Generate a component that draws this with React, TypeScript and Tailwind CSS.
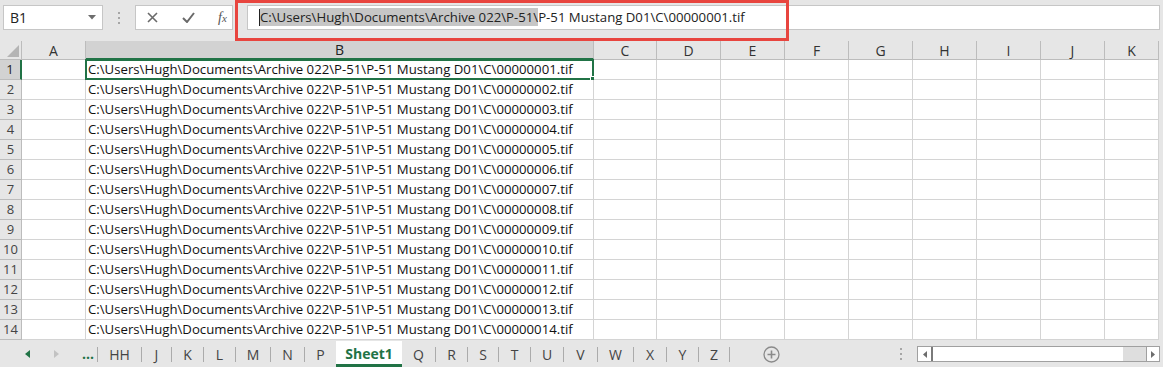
import { useState } from 'react'

const cellFont = { fontFamily: '"Open Sans", "Noto Sans", sans-serif' }

// column letters with widths (px, border included)
const COLUMNS = [
  { name: 'A', w: 'w-[64px]' },
  { name: 'B', w: 'w-[508px]' },
  { name: 'C', w: 'w-[63px]' },
  { name: 'D', w: 'w-[64px]' },
  { name: 'E', w: 'w-[64px]' },
  { name: 'F', w: 'w-[64px]' },
  { name: 'G', w: 'w-[64px]' },
  { name: 'H', w: 'w-[64px]' },
  { name: 'I', w: 'w-[64px]' },
  { name: 'J', w: 'w-[64px]' },
  { name: 'K', w: 'w-[54px]' },
]

const TABS_BEFORE = [
  { name: 'HH', w: 'w-[43px]' },
  { name: 'J', w: 'w-[29px]' },
  { name: 'K', w: 'w-[31px]' },
  { name: 'L', w: 'w-[31px]' },
  { name: 'M', w: 'w-[34px]' },
  { name: 'N', w: 'w-[33px]' },
  { name: 'P', w: 'w-[31px]' },
]

const TABS_AFTER = [
  { name: 'Q', w: 'w-[33px]' },
  { name: 'R', w: 'w-[31px]' },
  { name: 'S', w: 'w-[30px]' },
  { name: 'T', w: 'w-[31px]' },
  { name: 'U', w: 'w-[32px]' },
  { name: 'V', w: 'w-[33px]' },
  { name: 'W', w: 'w-[35px]' },
  { name: 'X', w: 'w-[32px]' },
  { name: 'Y', w: 'w-[31px]' },
  { name: 'Z', w: 'w-[30px]' },
]

const ROWS = Array.from({ length: 14 }, (_, i) => i + 1)

function pathFor(n: number) {
  return `C:\\Users\\Hugh\\Documents\\Archive 022\\P-51\\P-51 Mustang D01\\C\\${String(n).padStart(8, '0')}.tif`
}

function Grip() {
  return (
    <div className="flex flex-col gap-[3px]">
      <span className="h-[2px] w-[2px] bg-[#a6a6a6]" />
      <span className="h-[2px] w-[2px] bg-[#a6a6a6]" />
      <span className="h-[2px] w-[2px] bg-[#a6a6a6]" />
    </div>
  )
}

function FormulaBar() {
  return (
    <div className="relative flex h-[41px] shrink-0 items-start bg-[#e6e6e6] pt-[5px]">
      {/* name box */}
      <div className="ml-[3px] flex h-[25px] w-[100px] items-center justify-between border border-[#c6c6c6] bg-white pl-[6px] pr-[6px]">
        <span className="text-[14px] text-[#222]" style={cellFont}>
          B1
        </span>
        <svg width="8" height="5" viewBox="0 0 8 5">
          <path d="M0 0h8L4 4.5z" fill="#6d6d6d" />
        </svg>
      </div>
      <div className="flex h-[25px] w-[32px] items-center justify-center">
        <Grip />
      </div>
      {/* cancel / enter / fx */}
      <div className="flex h-[25px] w-[98px] items-center border border-[#c6c6c6] bg-white">
        <svg className="ml-[11px]" width="11" height="11" viewBox="0 0 11 11">
          <path d="M1 1l9 9M10 1l-9 9" stroke="#6a6a6a" strokeWidth="1.6" />
        </svg>
        <svg className="ml-[24px]" width="13" height="11" viewBox="0 0 13 11">
          <path d="M1 6l4 4 7-9" stroke="#6a6a6a" strokeWidth="2" fill="none" />
        </svg>
        <span className="ml-[23px] text-[14px] italic text-[#555]" style={{ fontFamily: '"Liberation Serif", serif' }}>
          f<span className="text-[11px]">x</span>
        </span>
      </div>
      {/* formula input */}
      <div className="ml-[14px] mr-[3px] flex h-[25px] flex-1 items-center border border-[#c6c6c6] bg-white pl-[11px]">
        <span className="h-[17px] w-px bg-[#222]" />
        <span className="whitespace-pre text-[13.2px] text-[#222]" style={cellFont}>
          <span className="bg-[#c6c6c6]">C:\Users\Hugh\Documents\Archive 022\P-51\</span>P-51 Mustang D01\C\00000001.tif
        </span>
      </div>
      {/* red highlight annotation */}
      <div className="pointer-events-none absolute left-[235px] top-0 h-[41px] w-[554px] border-[3px] border-[#e8453f]" />
    </div>
  )
}

function Sheet() {
  const [active] = useState({ row: 1, col: 'B' })
  return (
    <div className="flex-1 bg-[#e6e6e6]" style={cellFont}>
      {/* column headers */}
      <div className="flex h-[19px]">
        <div className="relative w-[22px] border-r border-b border-[#bcbcbc] bg-[#e6e6e6]">
          <svg className="absolute bottom-[2px] right-[2px]" width="12" height="12" viewBox="0 0 12 12">
            <path d="M12 0v12H0z" fill="#b4b4b4" />
          </svg>
        </div>
        {COLUMNS.map((c) => (
          <div
            key={c.name}
            className={`${c.w} flex items-center justify-center border-r text-[14px] ${
              c.name === active.col
                ? 'border-b-2 border-r-[#bcbcbc] border-b-[#217346] bg-[#d2d2d2] text-[#222]'
                : 'border-b border-[#bcbcbc] bg-[#e6e6e6] text-[#333]'
            }`}
          >
            {c.name}
          </div>
        ))}
      </div>
      {/* rows */}
      {ROWS.map((r) => (
        <div key={r} className="flex h-[20px]">
          <div
            className={`flex w-[22px] items-center justify-center border-b text-[13px] ${
              r === active.row
                ? 'border-r-2 border-r-[#217346] border-b-[#bcbcbc] bg-[#d2d2d2] text-[#222]'
                : 'border-r border-[#bcbcbc] bg-[#e6e6e6] text-[#444]'
            }`}
          >
            {r}
          </div>
          {COLUMNS.map((c) => (
            <div
              key={c.name}
              className={`${c.w} relative flex items-center border-r border-b border-[#d4d4d4] bg-white`}
            >
              {c.name === 'B' && (
                <span className="whitespace-pre pl-[2px] text-[13.2px] text-[#111]">{pathFor(r)}</span>
              )}
              {c.name === active.col && r === active.row && (
                <div className="absolute -left-px -top-px h-[21px] w-[509px] border-2 border-[#217346]">
                  <span className="absolute -right-[3px] -bottom-[3px] h-[5px] w-[5px] border border-white bg-[#217346]" />
                </div>
              )}
            </div>
          ))}
        </div>
      ))}
    </div>
  )
}

function TabSep() {
  return <span className="h-[15px] w-px shrink-0 bg-[#ababab]" />
}

function TabBar() {
  return (
    <div className="flex h-[26px] shrink-0 items-center bg-[#e6e6e6] text-[14px] text-[#444]" style={cellFont}>
      <div className="flex w-[97px] items-center">
        <svg className="ml-[25px]" width="5" height="8" viewBox="0 0 5 8">
          <path d="M5 0v8L0 4z" fill="#217346" />
        </svg>
        <svg className="ml-[24px]" width="5" height="8" viewBox="0 0 5 8">
          <path d="M0 0v8l5-4z" fill="#c2c2c2" />
        </svg>
        <span className="ml-[23px] text-[14px] font-bold leading-none text-[#217346]">...</span>
      </div>
      <TabSep />
      {TABS_BEFORE.map((t, i) => (
        <div key={t.name} className="flex items-center">
          <div className={`${t.w} text-center`}>{t.name}</div>
          {i < TABS_BEFORE.length - 1 && <TabSep />}
        </div>
      ))}
      <div className="flex h-full w-[66px] items-center justify-center border-b-[3px] border-[#217346] bg-white pt-[2px] font-bold text-[#217346]">
        Sheet1
      </div>
      {TABS_AFTER.map((t) => (
        <div key={t.name} className="flex items-center">
          <div className={`${t.w} text-center`}>{t.name}</div>
          <TabSep />
        </div>
      ))}
      <svg className="ml-[33px]" width="17" height="17" viewBox="0 0 17 17">
        <circle cx="8.5" cy="8.5" r="7.5" fill="none" stroke="#8a8a8a" strokeWidth="1.3" />
        <path d="M8.5 4.5v8M4.5 8.5h8" stroke="#8a8a8a" strokeWidth="1.6" />
      </svg>
      <div className="flex-1" />
      <Grip />
      <div className="ml-[15px] mr-[3px] flex h-[16px] w-[243px] border border-[#a0a0a0] bg-white">
        <div className="flex w-[13px] items-center justify-center">
          <svg width="4" height="7" viewBox="0 0 4 7">
            <path d="M4 0v7L0 3.5z" fill="#6d6d6d" />
          </svg>
        </div>
        <div className="w-[192px] border-l-2 border-[#7a7a7a] bg-white" />
        <div className="flex-1 bg-[#dedede]" />
        <div className="flex w-[13px] items-center justify-center border-l border-[#a0a0a0]">
          <svg width="4" height="7" viewBox="0 0 4 7">
            <path d="M0 0v7l4-3.5z" fill="#6d6d6d" />
          </svg>
        </div>
      </div>
    </div>
  )
}

export default function App() {
  return (
    <div className="flex h-[367px] w-[1163px] flex-col overflow-hidden bg-[#e6e6e6]">
      <FormulaBar />
      <Sheet />
      <TabBar />
    </div>
  )
}
